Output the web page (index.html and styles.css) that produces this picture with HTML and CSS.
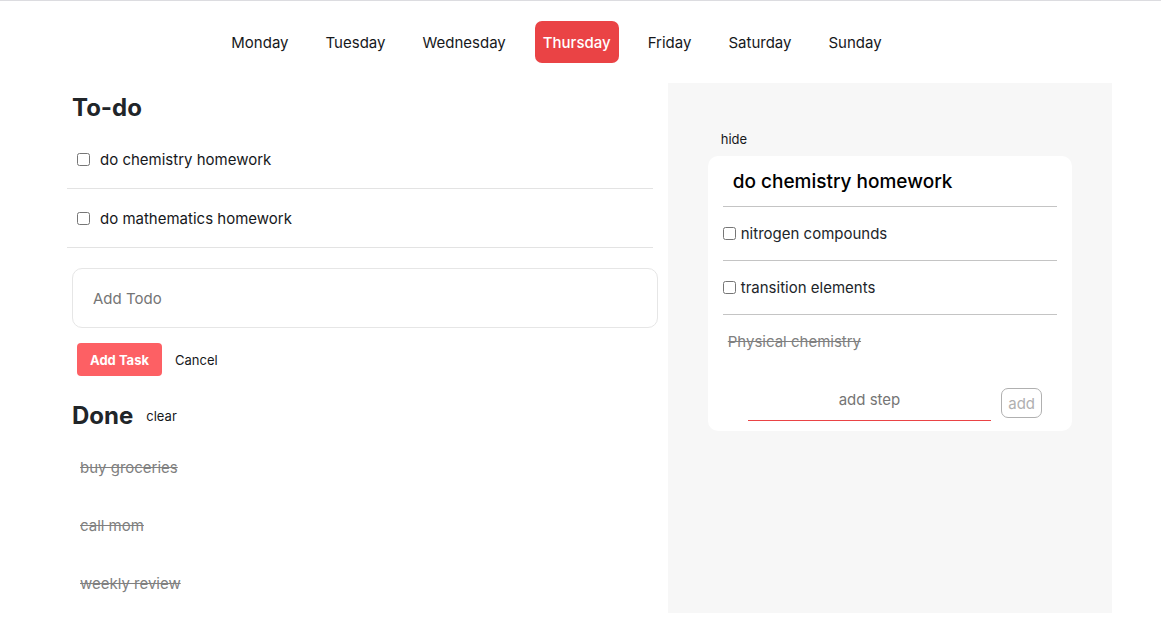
FILE: index.html
```html
<!DOCTYPE html>
<html lang="en">
<head>
<meta charset="utf-8">
<meta name="viewport" content="width=device-width, initial-scale=1">
<title>To-do</title>
<link rel="stylesheet" href="styles.css">
</head>
<body>
<nav class="days">
  <a class="day" href="#monday">Monday</a>
  <a class="day" href="#tuesday">Tuesday</a>
  <a class="day" href="#wednesday">Wednesday</a>
  <a class="day day-active" href="#thursday" aria-current="page">Thursday</a>
  <a class="day" href="#friday">Friday</a>
  <a class="day" href="#saturday">Saturday</a>
  <a class="day" href="#sunday">Sunday</a>
</nav>
<main class="planner">
  <section class="tasks">
    <h1 class="heading">To-do</h1>
    <ul class="todo-list">
      <li class="todo"><label class="check-label"><input class="check" type="checkbox">do chemistry homework</label></li>
      <li class="todo"><label class="check-label"><input class="check" type="checkbox">do mathematics homework</label></li>
    </ul>
    <form class="add-form">
      <input class="todo-input" type="text" placeholder="Add Todo" aria-label="Add Todo">
      <div class="actions">
        <button class="add-task" type="button">Add Task</button>
        <button class="plain" type="button">Cancel</button>
      </div>
    </form>
    <div class="done-head">
      <h2 class="heading">Done</h2>
      <button class="plain" type="button">clear</button>
    </div>
    <ul class="done-list">
      <li class="done">buy groceries</li>
      <li class="done">call mom</li>
      <li class="done">weekly review</li>
    </ul>
  </section>
  <aside class="details">
    <button class="plain hide" type="button">hide</button>
    <div class="card">
      <h3 class="card-title">do chemistry homework</h3>
      <ul class="steps">
        <li class="step"><label class="check-label step-label"><input class="check" type="checkbox">nitrogen compounds</label></li>
        <li class="step"><label class="check-label step-label"><input class="check" type="checkbox">transition elements</label></li>
        <li class="step step-done">Physical chemistry</li>
      </ul>
      <form class="step-form">
        <input class="step-input" type="text" placeholder="add step" aria-label="add step">
        <button class="step-add" type="button">add</button>
      </form>
    </div>
  </aside>
</main>
</body>
</html>
```
FILE: styles.css
```css
* {
  box-sizing: border-box;
}

body {
  margin: 0;
  border-top: 1px solid #dcdce0;
  background: #fff;
  color: #212529;
  font-family: Inter, "Liberation Sans", sans-serif;
  font-size: 15px;
  line-height: 22px;
}

h1, h2, h3, ul {
  margin: 0;
  padding: 0;
}

ul {
  list-style: none;
}

button, input {
  font-family: inherit;
}

.days {
  display: flex;
  justify-content: center;
  gap: 21px;
  padding: 20px 48px 20px 0;
}

.day {
  padding: 11px 8px 9px;
  border-radius: 7px;
  color: #16181b;
  text-decoration: none;
}

.day-active {
  background: #ea4345;
  color: #fff;
  font-weight: 500;
}

.planner {
  display: grid;
  grid-template-columns: 39fr 28fr;
  margin: 0 49px;
}

.tasks {
  padding: 9px 10px 0 23px;
}

.heading {
  font-size: 24px;
  line-height: 32px;
  font-weight: 700;
}

.todo-list {
  margin: 6px 5px 0 -5px;
}

.todo {
  padding: 19px 10px 17px;
  border-bottom: 1px solid #e3e3e3;
  color: #16181b;
}

.check-label {
  display: flex;
  align-items: center;
  gap: 10px;
}

.check {
  width: 13px;
  height: 13px;
  margin: 0 0 1px;
}

.todo-input {
  display: block;
  width: 100%;
  height: 60px;
  margin-top: 20px;
  padding: 0 20px;
  border: 1px solid #e6e6e6;
  border-radius: 10px;
  font-size: 15px;
}

.actions {
  display: flex;
  align-items: center;
  gap: 13px;
  padding: 15px 5px;
}

.add-task {
  height: 33px;
  padding: 0 13px;
  border: 0;
  border-radius: 4px;
  background: #fd6064;
  color: #fff;
  font-size: 13px;
  font-weight: 700;
}

.plain {
  padding: 0;
  border: 0;
  background: none;
  color: #16181b;
  font-size: 13px;
  line-height: 20px;
}

.done-head {
  display: flex;
  align-items: center;
  gap: 13px;
  margin-top: 9px;
}

.done-list {
  margin-top: 7px;
}

.done {
  padding: 18px 8px;
  color: #808080;
  text-decoration: line-through;
}

.details {
  padding: 46px 40px;
  background: #f7f7f7;
}

.hide {
  display: block;
  margin: 0 13px 7px;
}

.card {
  padding: 0 15px 10px;
  border-radius: 10px;
  background: #fff;
}

.card-title {
  padding: 10px 10px 8px;
  border-bottom: 1px solid #c4c4c4;
  color: #000;
  font-size: 19px;
  line-height: 32px;
  font-weight: 500;
}

.step {
  padding: 16px 0 15px;
  border-bottom: 1px solid #c4c4c4;
}

.step-label {
  gap: 5px;
}

.step-done {
  padding: 16px 5px;
  border-bottom: 0;
  color: #808080;
  text-decoration: line-through;
}

.step-form {
  display: flex;
  align-items: flex-end;
  gap: 10px;
  padding: 10px 15px 0 25px;
}

.step-input {
  flex: 1;
  min-width: 0;
  height: 42px;
  padding: 0;
  border: 0;
  border-bottom: 1px solid #ea4345;
  background: none;
  font-size: 15px;
  text-align: center;
}

.step-add {
  height: 30px;
  margin-bottom: 3px;
  padding: 0 6px;
  border: 1px solid #b0b0b0;
  border-radius: 7px;
  background: #fff;
  color: #b0b0b0;
  font-size: 15px;
}
```
